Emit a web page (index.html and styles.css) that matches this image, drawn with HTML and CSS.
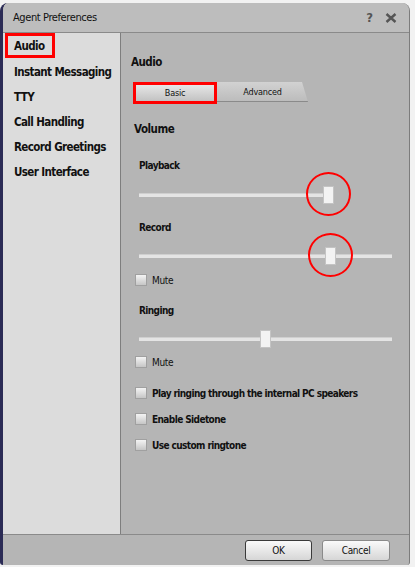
FILE: index.html
```html
<!DOCTYPE html>
<html>
<head>
<meta charset="utf-8">
<link rel="stylesheet" href="styles.css">
</head>
<body>
<div class="window">
  <div class="titlebar">
    <span class="title">Agent Preferences</span>
    <span class="tools"><span class="help">?</span><svg class="close" width="12" height="10" viewBox="0 0 12 10"><path d="M1.5 1 L10.5 9 M10.5 1 L1.5 9" stroke="#555" stroke-width="2.4" fill="none"/></svg></span>
  </div>
  <div class="main">
    <div class="sidebar">
      <div class="item first"><span class="sel">Audio</span></div>
      <div class="item">Instant Messaging</div>
      <div class="item">TTY</div>
      <div class="item">Call Handling</div>
      <div class="item">Record Greetings</div>
      <div class="item">User Interface</div>
    </div>
    <div class="content">
      <div class="heading">Audio</div>
      <div class="tabs">
        <div class="tab basic">Basic</div>
        <div class="tab advanced">Advanced</div>
      </div>
      <div class="volume">Volume</div>
      <div class="label l-playback">Playback</div>
      <div class="slider s-playback short">
        <div class="track"></div>
        <div class="thumb" style="left:184px"></div>
        <div class="ring" style="left:167px"></div>
      </div>
      <div class="label l-record">Record</div>
      <div class="slider s-record">
        <div class="track"></div>
        <div class="thumb" style="left:186px"></div>
        <div class="ring" style="left:169px"></div>
      </div>
      <div class="check c-mute1"><span class="box"></span><span class="plain">Mute</span></div>
      <div class="label l-ringing">Ringing</div>
      <div class="slider s-ringing">
        <div class="track"></div>
        <div class="thumb" style="left:121px"></div>
      </div>
      <div class="check c-mute2"><span class="box"></span><span class="plain">Mute</span></div>
      <div class="check c-play"><span class="box"></span><span class="bold">Play ringing through the internal PC speakers</span></div>
      <div class="check c-next"><span class="box"></span><span class="bold">Enable Sidetone</span></div>
      <div class="check c-next"><span class="box"></span><span class="bold">Use custom ringtone</span></div>
    </div>
  </div>
  <div class="footer">
    <button class="btn ok">OK</button>
    <button class="btn cancel">Cancel</button>
  </div>
</div>
</body>
</html>
```
FILE: styles.css
```css
html, body {
  margin: 0;
  padding: 0;
  background: #f2f2f2;
}
body {
  width: 415px;
  height: 567px;
  overflow: hidden;
  font-family: "DejaVu Sans Condensed", "DejaVu Sans", sans-serif;
  color: #111;
}
.window {
  margin: 3px 5px 2px 0;
  height: 562px;
  border-left: 3px solid #2b2b55;
  border-right: 1px solid #7c7c7c;
  border-radius: 8px 8px 3px 3px;
  background: #b5b5b5;
  display: flex;
  flex-direction: column;
  overflow: hidden;
  box-sizing: border-box;
}
.titlebar {
  height: 29px;
  flex: none;
  background: #bdbdbd;
  border-bottom: 1px solid #8a8a8a;
  display: flex;
  align-items: center;
  justify-content: space-between;
  padding: 0 12px 0 10px;
}
.title {
  font-size: 11px;
  color: #111;
  letter-spacing: -0.4px;
}
.tools {
  display: flex;
  gap: 12px;
  align-items: center;
  color: #555;
  font-weight: bold;
}
.help { font-size: 13px; }
.close { display: block; }
.main {
  flex: 1;
  display: flex;
  border-bottom: 1px solid #8a8a8a;
}
.sidebar {
  width: 117px;
  flex: none;
  background: #dcdcdc;
  border-right: 1px solid #7e7e7e;
}
.item {
  height: 25px;
  line-height: 25px;
  padding-left: 11px;
  font-size: 11.5px;
  font-weight: bold;
  letter-spacing: -0.6px;
  white-space: nowrap;
}
.item.first {
  height: 27px;
  line-height: 27px;
}
.item .sel {
  display: inline-block;
  vertical-align: top;
  margin-left: -9px;
  padding: 0 8px 0 6px;
  height: 19px;
  line-height: 21px;
  border: 3px solid #f00;
}
.content {
  flex: 1;
  display: flex;
  flex-direction: column;
  align-items: flex-start;
}
.heading {
  margin: 21px 0 0 10px;
  line-height: 16px;
  font-size: 11.5px;
  letter-spacing: -0.5px;
  font-weight: bold;
}
.tabs {
  margin: 12px 0 0 12px;
  display: flex;
  height: 22px;
}
.tab {
  font-size: 9px;
  letter-spacing: -0.2px;
  display: flex;
  align-items: center;
  justify-content: center;
  box-sizing: border-box;
}
.basic {
  width: 84px;
  border: 3px solid #f00;
  background: linear-gradient(#e6e6e6, #c2c2c2);
}
.advanced {
  width: 91px;
  height: 20px;
  background: linear-gradient(#d2d2d2, #bcbcbc);
  border-bottom: 1px solid #8a8a8a;
  clip-path: polygon(0 0, 85px 0, 91px 100%, 0 100%);
}
.volume {
  margin: 17px 0 0 13px;
  line-height: 16px;
  font-size: 11.5px;
  letter-spacing: -0.5px;
  font-weight: bold;
}
.label {
  margin-left: 18px;
  line-height: 14px;
  font-size: 10px;
  letter-spacing: -0.6px;
  font-weight: bold;
}
.l-playback { margin-top: 22px; }
.l-record { margin-top: 16px; }
.l-ringing { margin-top: 17px; }
.slider {
  position: relative;
  margin-left: 18px;
  width: 253px;
  height: 20px;
  display: flex;
  align-items: center;
}
.slider.short { width: 195px; }
.s-playback { margin-top: 12px; }
.s-record { margin-top: 11px; }
.s-ringing { margin-top: 11px; }
.track {
  width: 100%;
  height: 4px;
  background: #e4e4e4;
  border-top: 1px solid #cfcfcf;
  box-sizing: border-box;
}
.short .track { width: 186px; }
.thumb {
  position: absolute;
  top: 1px;
  width: 11px;
  height: 18px;
  box-sizing: border-box;
  background: #f3f3f3;
  border: 1px solid #c4c4c4;
}
.ring {
  position: absolute;
  top: -13px;
  width: 45px;
  height: 44px;
  box-sizing: border-box;
  border: 2.5px solid #f00;
  border-radius: 50%;
}
.check {
  margin-left: 14px;
  height: 14px;
  display: flex;
  align-items: center;
  gap: 5px;
  font-size: 10px;
}
.c-mute1 { margin-top: 7px; }
.c-mute2 { margin-top: 6px; }
.c-play { margin-top: 17px; }
.c-next { margin-top: 12px; }
.box {
  width: 12px;
  height: 12px;
  flex: none;
  box-sizing: border-box;
  border: 1px solid #a0a0a0;
  background: linear-gradient(#f4f4f4, #c6c6c6);
}
.plain { font-weight: normal; letter-spacing: -0.3px; }
.bold { font-weight: bold; letter-spacing: -0.6px; }
.footer {
  height: 30px;
  flex: none;
  display: flex;
  align-items: center;
  justify-content: flex-end;
  gap: 10px;
  padding-right: 19px;
}
.btn {
  height: 21px;
  font-family: "DejaVu Sans Condensed", "DejaVu Sans", sans-serif;
  font-size: 10px;
  letter-spacing: -0.3px;
  color: #111;
  border-radius: 3px;
  background: linear-gradient(#fafafa, #d6d6d6);
  padding: 0;
}
.ok { width: 67px; border: 1px solid #3a3a3a; }
.cancel { width: 68px; border: 1px solid #8a8a8a; }
```
